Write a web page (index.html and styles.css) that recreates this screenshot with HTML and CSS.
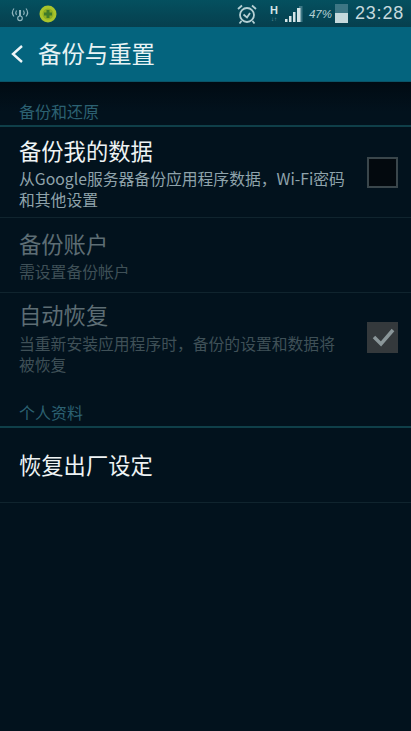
FILE: index.html
```html
<!DOCTYPE html>
<html lang="zh-CN">
<head>
<meta charset="utf-8">
<title>备份与重置</title>
<link rel="stylesheet" href="styles.css">
</head>
<body>
<div class="status">
  <svg class="ic-ap" viewBox="0 0 20 16" width="20" height="16"><g fill="none" stroke="#8fb4bd" stroke-width="1.2"><path d="M4 2.500C2 5 2 8 4 10.500M16 2.500c2 2.500 2 5.500 0 8M6.500 4.500c-1 1.500-1 3 0 4.500M13.500 4.500c1 1.500 1 3 0 4.500"/><circle cx="10" cy="12.300" r="2.300"/><path d="M10 4v6" stroke-width="2"/></g></svg>
  <svg class="ic-ball" viewBox="0 0 18 18" width="18" height="18"><circle cx="9" cy="9" r="8.500" fill="#a9c42c"/><circle cx="9" cy="9" r="5.500" fill="#8fae22"/><path d="M9 5v8M5 9h8" stroke="#3f7a2a" stroke-width="3"/></svg>
  <span class="grow"></span>
  <svg class="ic-alarm" viewBox="0 0 22 22" width="22" height="22"><g fill="none" stroke="#b5d0d4" stroke-width="1.800"><circle cx="11" cy="12" r="7"/><path d="M7.500 11.500l3.500 3 3-4.500M2 6l4-3.500M20 6l-4-3.500M5.500 18l-2 2.500M16.500 18l2 2.500"/></g></svg>
  <span class="net"><b>H</b><i>↓↑</i></span>
  <svg class="ic-sig" viewBox="0 0 18 18" width="18" height="18"><path fill="#3d7684" d="M14 1h3.500v16H14z"/><path fill="#d4e4e6" d="M0 14h2.500v3H0zM4 11h2.500v6H4zM8 7h2.500v10H8zM12 3h3.500v14H12z"/></svg>
  <span class="pct">47%</span>
  <span class="batt"><span class="batt-fill"></span></span>
  <span class="clock">23:28</span>
</div>
<header class="bar">
  <svg class="back" viewBox="0 0 14 20" width="14" height="20"><path d="M12 2L3 10l9 8" fill="none" stroke="#eef6f8" stroke-width="2.400"/></svg>
  <h1>备份与重置</h1>
</header>
<main>
  <h2 class="sec first">备份和还原</h2>
  <section class="row r1">
    <div class="txt">
      <div class="t">备份我的数据</div>
      <div class="s">从Google服务器备份应用程序数据，Wi-Fi密码<br>和其他设置</div>
    </div>
    <span class="box"></span>
  </section>
  <section class="row r2 dim">
    <div class="txt">
      <div class="t">备份账户</div>
      <div class="s">需设置备份帐户</div>
    </div>
  </section>
  <section class="row r3 dim">
    <div class="txt">
      <div class="t">自动恢复</div>
      <div class="s">当重新安装应用程序时，备份的设置和数据将<br>被恢复</div>
    </div>
    <span class="box on"><svg viewBox="0 0 30 30" width="30" height="30"><path d="M6 15l7 7L25 8" fill="none" stroke="#8a9699" stroke-width="3.500"/></svg></span>
  </section>
  <h2 class="sec second">个人资料</h2>
  <section class="row r4">
    <div class="t">恢复出厂设定</div>
  </section>
</main>
</body>
</html>
```
FILE: styles.css
```css
* { box-sizing: border-box; }
html, body { margin: 0; height: 100%; }
body {
  width: 411px; height: 731px; overflow: hidden;
  background: #02111c;
  font-family: "Noto Sans CJK SC", "Noto Sans", sans-serif;
  color: #eef3f4;
  display: flex; flex-direction: column;
}
.status {
  height: 27px; flex: none;
  background: linear-gradient(#04505f, #063f4e);
  display: flex; align-items: center;
  padding: 0 7px 0 10px;
}
.ic-ball { margin-left: 9px; }
.grow { flex: 1; }
.net {
  width: 10px; margin-left: 11px;
  display: flex; flex-direction: column; align-items: center;
  line-height: 1; color: #d4e4e6;
  font-family: "Liberation Sans", sans-serif;
}
.net b { font-size: 11px; }
.net i { font-size: 6px; font-style: normal; color: #6f9aa4; }
.ic-sig { margin-left: 6px; }
.pct {
  font-size: 11.500px; color: #b5d0d4; margin-left: 6px;
  font-family: "Liberation Sans", sans-serif; font-style: italic;
}
.batt {
  width: 13px; height: 19px; margin-left: 3px;
  background: #3d7684; display: flex; align-items: flex-end;
}
.batt-fill { display: block; width: 100%; height: 10px; background: #c5d9dc; }
.clock {
  font-family: "Liberation Sans", sans-serif;
  font-size: 18px; letter-spacing: 0.8px; color: #c5dade; margin-left: 7px;
}
.bar {
  height: 55px; flex: none;
  background: #04647e;
  display: flex; align-items: center;
  padding-left: 10px; gap: 14px;
  border-bottom: 1px solid #0a5468;
}
.bar h1 { margin: 0; font-size: 23.400px; font-weight: 400; line-height: 1; color: #e8f3f5; }
main { flex: 1; background: linear-gradient(#010b13, #02121d 30px); }
.sec {
  margin: 0; padding: 0 19px;
  font-size: 16px; font-weight: 400; line-height: 20px;
  color: #2c6172;
  border-bottom: 2px solid #0f3f49;
}
.sec.first { padding-top: 19px; height: 45px; }
.sec.second { padding-top: 27px; height: 53px; }
.row {
  display: flex; align-items: center;
  padding: 0 13px 0 19px;
  border-bottom: 1px solid #10242e;
}
.r1 { height: 91px; }
.r2 { height: 75px; }
.r3 { height: 82px; border-bottom: 0; }
.r4 { height: 75px; padding-bottom: 3px; }
.txt { flex: 1; min-width: 0; }
.t { font-size: 22.300px; line-height: 30px; white-space: nowrap; }
.s { font-size: 15.800px; line-height: 21px; color: #8fa3ab; white-space: nowrap; }
.r1 .t { margin-bottom: 3px; }
.r2 .t { margin-bottom: 3px; }
.r3 .txt { padding-top: 6px; }
.r3 .t { margin-bottom: 4px; }
.dim .t { color: #5d6d74; }
.dim .s { color: #3f5057; }
.box {
  width: 31px; height: 31px; flex: none;
  border: 2px solid #3a464b; background: #03090e;
}
.box.on { background: #34393c; border: 0; margin-top: 6px; display: flex; align-items: center; justify-content: center; }
```
